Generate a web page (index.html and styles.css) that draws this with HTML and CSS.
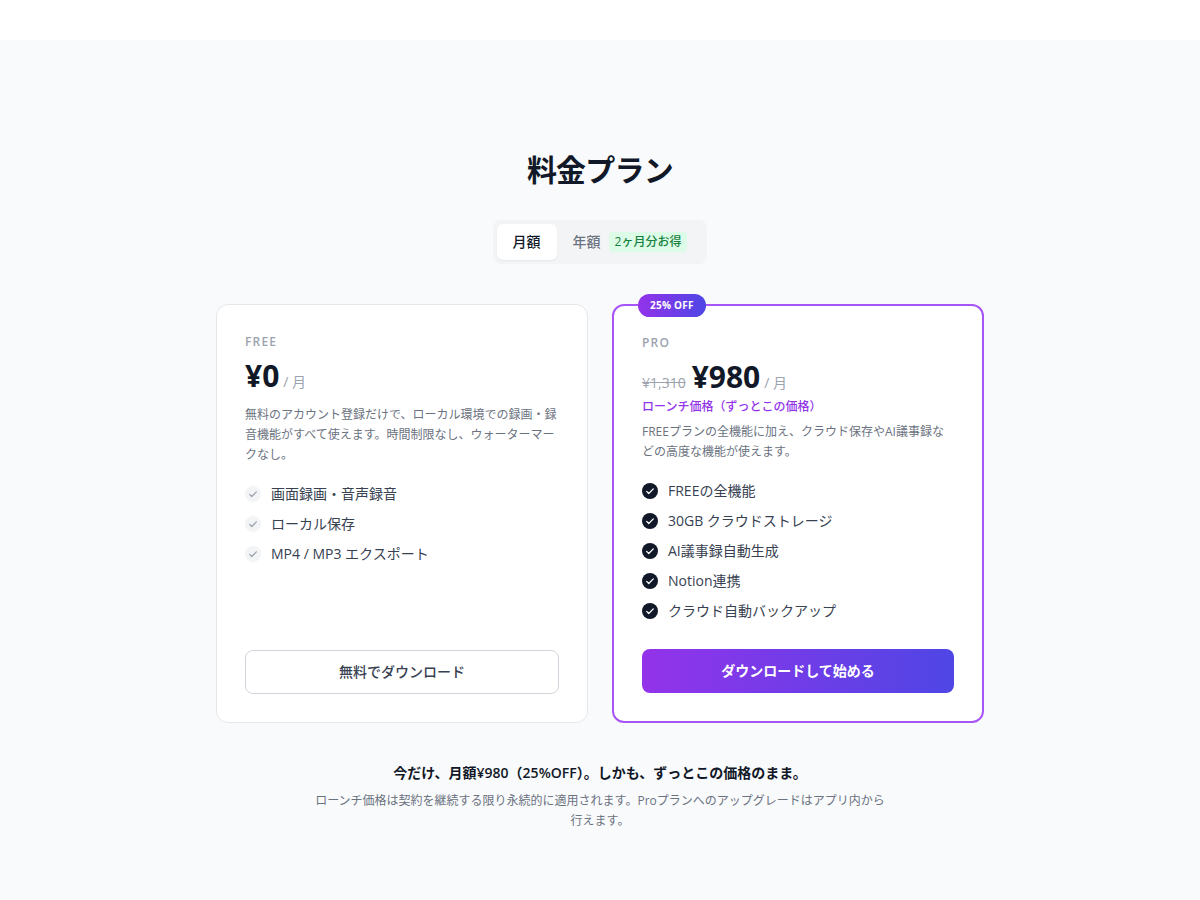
FILE: index.html
```html
<!DOCTYPE html>
<html lang="ja">
<head>
  <meta charset="UTF-8">
  <meta name="viewport" content="width=device-width, initial-scale=1">
  <title>料金プラン</title>
  <link rel="stylesheet" href="styles.css">
</head>
<body>
  <!-- チェックアイコン -->
  <svg class="sprite" aria-hidden="true">
    <symbol id="check" viewBox="0 0 24 24">
      <path d="M4 13l5 5L20 7" fill="none" stroke="currentColor" stroke-width="3" stroke-linecap="round" stroke-linejoin="round"/>
    </symbol>
  </svg>

  <section class="pricing" id="pricing">
    <div class="container">
      <h2>料金プラン</h2>

      <!-- 月額 / 年額 切り替え -->
      <div class="toggle">
        <button type="button" class="toggle-btn active">月額</button>
        <button type="button" class="toggle-btn">年額<span class="save-tag">2ヶ月分お得</span></button>
      </div>

      <div class="plans">
        <div class="plan">
          <h3>FREE</h3>
          <div class="price-row">
            <span class="price">¥0</span>
            <span class="per">/ 月</span>
          </div>
          <p class="desc">無料のアカウント登録だけで、ローカル環境での録画・録音機能がすべて使えます。時間制限なし、ウォーターマークなし。</p>
          <ul class="features">
            <li><span class="tick"><svg><use href="#check"/></svg></span>画面録画・音声録音</li>
            <li><span class="tick"><svg><use href="#check"/></svg></span>ローカル保存</li>
            <li><span class="tick"><svg><use href="#check"/></svg></span>MP4 / MP3 エクスポート</li>
          </ul>
          <a class="plan-btn" href="#download">無料でダウンロード</a>
        </div>

        <div class="plan pro">
          <span class="badge">25% OFF</span>
          <h3>PRO</h3>
          <div class="price-row">
            <s class="old-price">¥1,310</s>
            <span class="price">¥980</span>
            <span class="per">/ 月</span>
          </div>
          <p class="launch">ローンチ価格（ずっとこの価格）</p>
          <p class="desc">FREEプランの全機能に加え、クラウド保存やAI議事録などの高度な機能が使えます。</p>
          <ul class="features">
            <li><span class="tick"><svg><use href="#check"/></svg></span>FREEの全機能</li>
            <li><span class="tick"><svg><use href="#check"/></svg></span>30GB クラウドストレージ</li>
            <li><span class="tick"><svg><use href="#check"/></svg></span>AI議事録自動生成</li>
            <li><span class="tick"><svg><use href="#check"/></svg></span>Notion連携</li>
            <li><span class="tick"><svg><use href="#check"/></svg></span>クラウド自動バックアップ</li>
          </ul>
          <a class="plan-btn" href="#download">ダウンロードして始める</a>
        </div>
      </div>

      <div class="note">
        <p class="note-title">今だけ、月額¥980（25%OFF）。しかも、ずっとこの価格のまま。</p>
        <p class="note-text">ローンチ価格は契約を継続する限り永続的に適用されます。Proプランへのアップグレードはアプリ内から行えます。</p>
      </div>
    </div>
  </section>
</body>
</html>
```
FILE: styles.css
```css
* {
  box-sizing: border-box;
}
body {
  margin: 0;
  padding-top: 40px;
  background: #fff;
  color: #111827;
  font-family: "Open Sans", "Noto Sans CJK JP", sans-serif;
  font-size: 14px;
  line-height: 20px;
}
h2, h3, p, ul {
  margin: 0;
  padding: 0;
}
.sprite {
  display: none;
}
.pricing {
  background: #f9fafc;
  padding: 112px 24px;
}
.container {
  max-width: 768px;
  margin: 0 auto;
}
h2 {
  font-size: 30px;
  line-height: 36px;
  font-weight: 700;
  letter-spacing: -0.025em;
  text-align: center;
}

/* toggle */
.toggle {
  display: flex;
  width: fit-content;
  margin: 32px auto 40px;
  padding: 4px;
  background: #f3f4f6;
  border-radius: 8px;
}
.toggle-btn {
  display: flex;
  align-items: center;
  gap: 8px;
  height: 36px;
  padding: 0 16px;
  border: none;
  border-radius: 6px;
  background: transparent;
  color: #6b7280;
  font-family: inherit;
  font-size: 14px;
  font-weight: 500;
  line-height: 20px;
  cursor: pointer;
}
.toggle-btn.active {
  background: #fff;
  color: #111827;
  box-shadow: 0 1px 2px rgba(0, 0, 0, 0.05);
}
.save-tag {
  padding: 2px 6px;
  border-radius: 4px;
  background: #dcfce7;
  color: #15803d;
  font-size: 12px;
  line-height: 16px;
}

/* plans */
.plans {
  display: grid;
  grid-template-columns: 1fr 1fr;
  gap: 24px;
}
.plan {
  position: relative;
  display: flex;
  flex-direction: column;
  padding: 28px;
  background: #fff;
  border: 1px solid #e5e7eb;
  border-radius: 12px;
}
.plan.pro {
  border: 2px solid #a855f7;
}
.badge {
  position: absolute;
  top: -12px;
  left: 24px;
  padding: 4px 12px;
  border-radius: 12px;
  background: linear-gradient(to right, #9333ea, #4f46e5);
  color: #fff;
  font-size: 10px;
  font-weight: 700;
  line-height: 15px;
  letter-spacing: 0.025em;
}
h3 {
  margin-bottom: 7px;
  color: #9ca3af;
  font-size: 12px;
  font-weight: 600;
  line-height: 18px;
  letter-spacing: 0.1em;
}
.price-row {
  display: flex;
  align-items: baseline;
  gap: 4px;
}
.price {
  font-size: 30px;
  font-weight: 700;
  line-height: 36px;
}
.per, .old-price {
  color: #9ca3af;
}
.old-price {
  margin-right: 2px;
}
.launch {
  margin-top: 4px;
  color: #9333ea;
  font-size: 12px;
  font-weight: 500;
  line-height: 16px;
}
.desc {
  margin-top: 11px;
  color: #6b7280;
  font-size: 12px;
}
.launch + .desc {
  margin-top: 7px;
}
.features {
  display: flex;
  flex-direction: column;
  flex: 1;
  gap: 10px;
  margin: 19px 0 28px;
  list-style: none;
  color: #374151;
}
.features li {
  display: flex;
  align-items: center;
  gap: 10px;
}
.tick {
  display: flex;
  align-items: center;
  justify-content: center;
  width: 16px;
  height: 16px;
  border-radius: 50%;
  background: #f3f4f6;
  color: #9ca3af;
}
.tick svg {
  width: 10px;
  height: 10px;
}
.pro .tick {
  background: #111827;
  color: #fff;
}
.plan-btn {
  display: flex;
  align-items: center;
  justify-content: center;
  height: 44px;
  border: 1px solid #d1d5db;
  border-radius: 8px;
  color: #374151;
  font-weight: 500;
  text-decoration: none;
}
.pro .plan-btn {
  border: none;
  background: linear-gradient(to right, #9333ea, #4f46e5);
  color: #fff;
  font-weight: 700;
}

/* note */
.note {
  max-width: 576px;
  margin: 40px auto 0;
  text-align: center;
}
.note-title {
  font-weight: 600;
}
.note-text {
  margin-top: 8px;
  color: #6b7280;
  font-size: 12px;
}

@media (max-width: 640px) {
  .plans {
    grid-template-columns: 1fr;
  }
}
```
